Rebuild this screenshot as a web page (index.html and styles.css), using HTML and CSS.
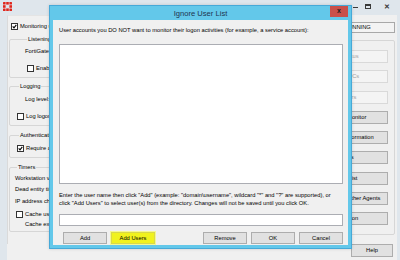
FILE: index.html
```html
<!DOCTYPE html>
<html>
<head>
<meta charset="utf-8">
<link rel="stylesheet" href="styles.css">
</head>
<body>
<div class="app">
  <div class="titlebar">
    <svg class="logo" viewBox="0 0 9 9">
      <rect x="0" y="0" width="2.6" height="2.6" rx="0.5"/>
      <rect x="3.2" y="0" width="2.6" height="2.6"/>
      <rect x="6.4" y="0" width="2.6" height="2.6" rx="0.5"/>
      <rect x="0" y="3.2" width="2.6" height="2.6"/>
      <rect x="6.4" y="3.2" width="2.6" height="2.6"/>
      <rect x="0" y="6.4" width="2.6" height="2.6" rx="0.5"/>
      <rect x="3.2" y="6.4" width="2.6" height="2.6"/>
      <rect x="6.4" y="6.4" width="2.6" height="2.6" rx="0.5"/>
    </svg>
    <div class="caps">
      <span class="cap min"><span class="min-bar"></span></span>
      <span class="cap max"><span class="max-box"></span></span>
      <span class="cap close">&#10005;</span>
    </div>
  </div>

  <div class="client">
    <div class="main">
      <div class="left">
        <div class="row r-mon"><span class="chk"><svg viewBox="0 0 5 5"><path d="M0.7 2.4 L2 3.9 L4.3 0.9"/></svg></span>Monitoring user logon events is enabled</div>

        <fieldset class="grp g-ports">
          <legend>Listening ports</legend>
          <div class="row r-forti">FortiGate: <span class="val">8000</span></div>
          <div class="row r-enable"><span class="chk"></span>Enable NTLM authentication</div>
        </fieldset>

        <fieldset class="grp g-log">
          <legend>Logging</legend>
          <div class="row r-level">Log level: Warning</div>
          <div class="row r-logon"><span class="chk"></span>Log logon events in separate logs</div>
        </fieldset>

        <fieldset class="grp g-auth">
          <legend>Authentication</legend>
          <div class="row r-req"><span class="chk"><svg viewBox="0 0 5 5"><path d="M0.7 2.4 L2 3.9 L4.3 0.9"/></svg></span>Require authenticated connection from FortiGate</div>
        </fieldset>

        <fieldset class="grp g-timers">
          <legend>Timers</legend>
          <div class="row r-ws">Workstation verify interval (minutes):</div>
          <div class="row r-dead">Dead entity timeout interval (minutes):</div>
          <div class="row r-ip">IP address change verify interval (seconds):</div>
          <div class="row r-cache"><span class="chk"></span>Cache user group lookup result</div>
          <div class="row r-exp">Cache expire in (minutes):</div>
        </fieldset>
      </div>

      <div class="right">
        <div class="status-row"><span>Service status:</span><span class="status">RUNNING</span></div>
        <fieldset class="grp g-tasks">
          <legend>Common Tasks</legend>
          <div class="tasks">
            <button class="wbtn off">Show Service Status</button>
            <button class="wbtn off">Show Monitored DCs</button>
            <button class="wbtn off">Show Logon Users</button>
            <button class="wbtn">Select Domains To Monitor</button>
            <button class="wbtn">Set Directory Access Information</button>
            <button class="wbtn">Set Group Filters</button>
            <button class="wbtn">Set Ignore User List</button>
            <button class="wbtn">Sync Configuration With Other Agents</button>
            <button class="wbtn">Export Configuration</button>
          </div>
        </fieldset>
      </div>
    </div>
    <div class="footer"><button class="wbtn help">Help</button></div>
  </div>

  <div class="dialog">
    <div class="dlg-title">
      <span></span>
      <span class="dlg-caption">Ignore User List</span>
      <span class="dlg-close">x</span>
    </div>
    <div class="dlg-client">
      <p class="dlg-text">User accounts you DO NOT want to monitor their logon activities (for example, a service account):</p>
      <div class="listbox"></div>
      <p class="dlg-help">Enter the user name then click "Add" (example: "domain\username", wildcard "*" and "?" are supported), or<br>click "Add Users" to select user(s) from the directory. Changes will not be saved until you click OK.</p>
      <div class="textbox"></div>
      <div class="dlg-btns">
        <div class="bgroup">
          <button class="wbtn dbtn">Add</button>
          <button class="wbtn dbtn hl">Add Users</button>
        </div>
        <div class="bgroup">
          <button class="wbtn dbtn">Remove</button>
          <button class="wbtn dbtn">OK</button>
          <button class="wbtn dbtn">Cancel</button>
        </div>
      </div>
    </div>
  </div>
</div>
</body>
</html>
```

FILE: styles.css
```css
* { box-sizing: border-box; }
html, body { margin: 0; padding: 0; }
body {
  font-family: "Liberation Sans", Arial, sans-serif;
  font-size: 5.75px;
  line-height: 7px;
  color: #000;
  background: #f0f0f0;
}
.app {
  position: relative;
  width: 400px;
  height: 260px;
  overflow: hidden;
  background: #dfe6ec;
  display: flex;
  flex-direction: column;
}

/* main window title bar */
.titlebar {
  height: 15px;
  flex: none;
  display: flex;
  justify-content: space-between;
  align-items: flex-start;
}
.logo { width: 9px; height: 9px; margin: 2px 0 0 3px; fill: #e0261c; }
.caps { display: flex; height: 13px; }
.cap { display: flex; align-items: center; justify-content: center; color: #3a3a3a; }
.cap.min { width: 12px; }
.cap.max { width: 13px; }
.cap.close { width: 26px; font-size: 7px; font-weight: bold; }
.min-bar { width: 5px; height: 1px; background: #3a3a3a; margin-top: 2px; }
.max-box { width: 6px; height: 5px; border: 1px solid #3a3a3a; border-top-width: 2px; }

/* main window client */
.client {
  flex: 1;
  margin: 0 3px 0 7px;
  background: #f0f0f0;
  display: flex;
  flex-direction: column;
}
.main { display: flex; height: 229px; flex: none; }
.left {
  flex: 1;
  border-left: 1px solid #dadada;
  border-top: 1px solid #e4e4e4;
  padding: 0 8px 0 0;
}
.row { display: flex; align-items: center; height: 7px; white-space: nowrap; }
.chk {
  width: 7px; height: 7px; flex: none;
  border: 1px solid #333;
  background: #fff;
  margin-right: 2px;
  display: flex;
}
.chk svg { width: 5px; height: 5px; fill: none; stroke: #000; stroke-width: 1.1; }
.val { margin-left: 20px; }

.grp {
  margin: 0 0 0 1px;
  border: 1px solid #d6d6d6;
  border-radius: 2px;
  padding: 0;
  min-width: 0;
}
.grp legend {
  padding: 0 1px;
  margin-left: 2px;
  line-height: 7px;
  height: 7px;
}

.r-mon { margin: 7px 0 0 3px; }
.g-ports { margin-top: 6px; padding: 5px 0 5px 15px; }
.r-enable { margin: 10px 0 0 2px; }
.g-log { margin-top: 5px; padding: 6px 0 5px 7px; }
.r-level { margin-left: 8px; }
.r-logon { margin-top: 10px; }
.g-auth { margin-top: 6px; padding: 6px 0 5px 7px; }
.g-timers { margin-top: 6px; padding: 4px 0 3px 5px; }
.r-dead { margin-top: 4px; }
.r-ip { margin-top: 5px; }
.r-cache { margin: 6px 0 0 1px; }
.r-exp { margin: 3px 0 0 10px; }

.right {
  width: 128px;
  flex: none;
  padding-right: 2px;
  display: flex;
  flex-direction: column;
}
.status-row {
  margin-top: 7px;
  height: 11px;
  display: flex;
  justify-content: flex-end;
  align-items: center;
  gap: 4px;
}
.status {
  width: 55px;
  height: 11px;
  border: 1px solid #a8a8a8;
  background: #f3f3f3;
  padding-left: 3px;
  line-height: 9px;
}
.g-tasks { margin: 4px 0 0 0; padding: 6px 6px 9px 6px; }
.tasks { display: flex; flex-direction: column; gap: 7.25px; }

.wbtn {
  font: inherit;
  font-family: "Liberation Sans", Arial, sans-serif;
  font-size: 5.75px;
  line-height: 7px;
  height: 13px;
  padding: 0;
  margin: 0;
  color: #000;
  background: #e1e1e1;
  border: 1px solid #adadad;
  border-radius: 0;
  white-space: nowrap;
  overflow: hidden;
}
.wbtn.off { background: #f4f4f4; border-color: #d9d9d9; color: #a3a3a3; }

.footer { display: flex; justify-content: flex-end; padding: 0 4px 0 0; }
.help { width: 42px; }

/* dialog */
.dialog {
  position: absolute;
  left: 49px;
  top: 5px;
  width: 303px;
  height: 244px;
  background: #63c8ea;
  border: 1px solid #46a9d8;
  padding: 0 3px 3px 3px;
  display: flex;
  flex-direction: column;
  box-shadow: 0 0 3px rgba(0,0,0,0.15);
}
.dlg-title {
  height: 14px;
  flex: none;
  display: grid;
  grid-template-columns: 1fr auto 1fr;
  align-items: start;
}
.dlg-caption {
  font-size: 7.6px;
  line-height: 14px;
  color: #1f3550;
  padding-top: 1px;
}
.dlg-close {
  justify-self: end;
  width: 18px;
  height: 11px;
  background: #c9504a;
  color: #1a1a1a;
  font-size: 7px;
  font-weight: bold;
  line-height: 10px;
  text-align: center;
}
.dlg-client {
  flex: 1;
  background: #f0f0f0;
  padding: 6px 5px 0 6px;
  display: flex;
  flex-direction: column;
}
.dlg-text { margin: 0; line-height: 8px; white-space: nowrap; }
.listbox {
  margin-top: 10px;
  height: 140px;
  flex: none;
  background: #fff;
  border: 1px solid #abadb3;
}
.dlg-help { margin: 7px 0 0 0; line-height: 8px; white-space: nowrap; }
.textbox {
  margin-top: 7px;
  height: 12px;
  flex: none;
  background: #fff;
  border: 1px solid #abadb3;
}
.dlg-btns {
  margin-top: 6px;
  display: flex;
  justify-content: space-between;
  padding-left: 4px;
}
.bgroup { display: flex; gap: 4px; }
.dbtn { width: 44px; height: 12px; }
.dbtn.hl {
  background: #f0f21e;
  border-color: #d8d84a;
  box-shadow: 0 0 0 1px #f6f890;
}
```
